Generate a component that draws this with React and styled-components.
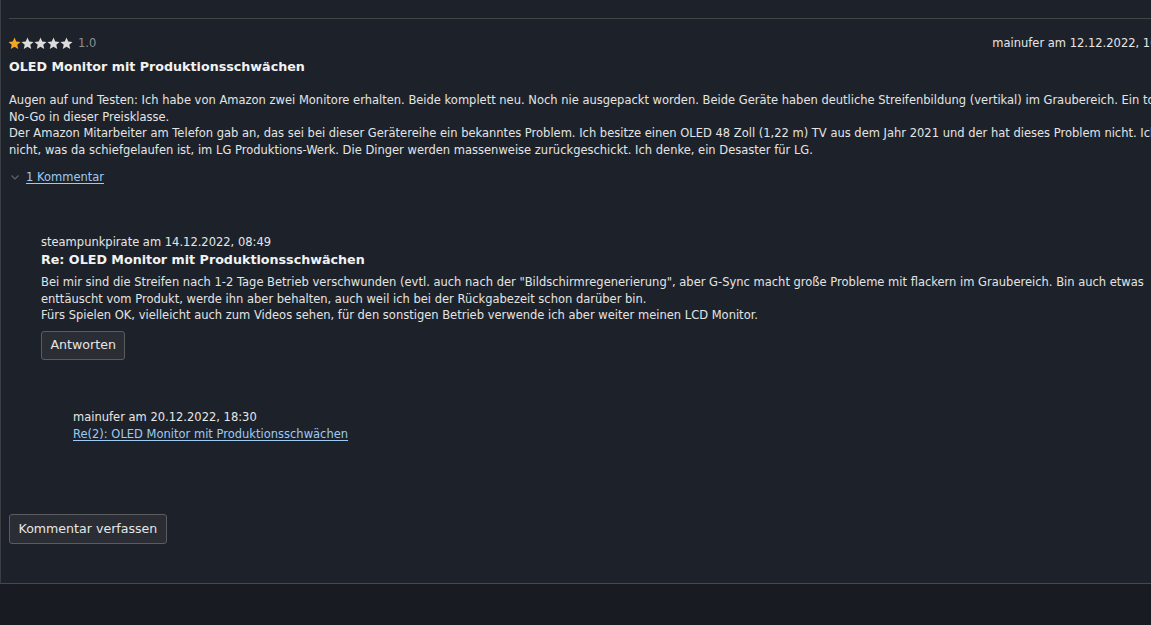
import React from "react";
import styled, { createGlobalStyle } from "styled-components";

const Global = createGlobalStyle`
  html, body { margin: 0; padding: 0; background: #181b21; overflow: hidden; }
  body { font-family: "DejaVu Sans", Verdana, sans-serif; color: #e6e6e6; }
  #root { width: 1151px; height: 625px; overflow: hidden; }
`;

const Panel = styled.section`
  width: 1193px;
  padding: 18px 9px 39px 8px;
  background: #1d222a;
  border-left: 1px solid #3a3d42;
  border-bottom: 1px solid #45484d;
`;

const Rule = styled.hr`
  margin: 0;
  border: 0;
  height: 1px;
  background: #44464a;
`;

const HeaderRow = styled.div`
  display: flex;
  justify-content: space-between;
  align-items: center;
  height: 16px;
  margin-top: 16px;
  font-size: 11.5px;
`;

const Rating = styled.div`
  display: flex;
  align-items: center;
`;

const Stars = styled.span`
  display: inline-flex;
  margin-left: -1px;
  margin-right: 5px;
`;

const Score = styled.span`
  color: #8c8f94;
`;

const Meta = styled.div`
  font-size: 11.5px;
  line-height: 16px;
  color: #e6e6e6;
  white-space: nowrap;
  padding-right: ${(p) => p.$pr || 0}px;
`;

const Title = styled.h3`
  margin: 8px 0 0;
  font-size: 12.7px;
  line-height: 16px;
  font-weight: bold;
  color: #f2f2f2;
`;

const Body = styled.p`
  margin: ${(p) => p.$top || 0}px 0 0;
  font-size: 11.5px;
  line-height: 16.5px;
  color: #e4e4e4;
`;

const Toggle = styled.div`
  display: flex;
  align-items: center;
  gap: 6px;
  margin-top: 11px;
  padding-left: 1px;
  font-size: 11.5px;
  line-height: 16px;
`;

const Link = styled.a`
  color: #9ccaf2;
  text-decoration: underline;
  text-underline-offset: 2px;
  cursor: pointer;
  font-size: 11.5px;
  line-height: 16px;
`;

const Reply = styled.div`
  margin-left: 32px;
  margin-top: ${(p) => p.$top}px;
  font-size: 11.5px;
  line-height: 16px;
`;

const ReplyTitle = styled.h4`
  margin: 1px 0 0;
  font-size: 12.7px;
  line-height: 18px;
  font-weight: bold;
  color: #f2f2f2;
`;

const Button = styled.button`
  display: block;
  margin-top: ${(p) => p.$top}px;
  height: ${(p) => p.$h}px;
  padding: 0 8.5px;
  background: #2a2d33;
  border: 1px solid #5a5c60;
  border-radius: 3px;
  color: #e6e6e6;
  font-family: "DejaVu Sans", Verdana, sans-serif;
  font-size: 12.6px;
  line-height: 16px;
  cursor: pointer;
`;

const LinkLine = styled.div`
  margin-top: 1px;
  height: 16px;
`;

const Star = ({ filled }) => (
  <svg width="13" height="13" viewBox="0 0 24 24">
    <path
      d="M12 1l3.2 7.3 7.9.7-6 5.2 1.8 7.8L12 18l-6.9 4 1.8-7.8-6-5.2 7.9-.7z"
      fill={filled ? "#f5a623" : "#dcdcdc"}
    />
  </svg>
);

const Chevron = () => (
  <svg width="10" height="10" viewBox="0 0 10 10">
    <path d="M1.5 3.5L5 7l3.5-3.5" fill="none" stroke="#5f646b" strokeWidth="1.2" />
  </svg>
);

export default function App() {
  return (
    <>
      <Global />
      <Panel>
        <Rule />
        <HeaderRow>
          <Rating>
            <Stars>
              {[0, 1, 2, 3, 4].map((i) => (
                <Star key={i} filled={i === 0} />
              ))}
            </Stars>
            <Score>1.0</Score>
          </Rating>
          <Meta $pr={26}>mainufer am 12.12.2022, 10:17</Meta>
        </HeaderRow>
        <Title>OLED Monitor mit Produktionsschwächen</Title>
        <Body $top={17}>
          Augen auf und Testen: Ich habe von Amazon zwei Monitore erhalten. Beide komplett neu. Noch nie ausgepackt worden. Beide Geräte haben deutliche Streifenbildung (vertikal) im Graubereich. Ein totales No-Go in dieser Preisklasse.
          <br />
          Der Amazon Mitarbeiter am Telefon gab an, das sei bei dieser Gerätereihe ein bekanntes Problem. Ich besitze einen OLED 48 Zoll (1,22 m) TV aus dem Jahr 2021 und der hat dieses Problem nicht. Ich weiß nicht, was da schiefgelaufen ist, im LG Produktions-Werk. Die Dinger werden massenweise zurückgeschickt. Ich denke, ein Desaster für LG.
        </Body>
        <Toggle>
          <Chevron />
          <Link>1 Kommentar</Link>
        </Toggle>
        <Reply $top={49}>
          <Meta>steampunkpirate am 14.12.2022, 08:49</Meta>
          <ReplyTitle>Re: OLED Monitor mit Produktionsschwächen</ReplyTitle>
          <Body $top={5}>
            Bei mir sind die Streifen nach 1-2 Tage Betrieb verschwunden (evtl. auch nach der "Bildschirmregenerierung", aber G-Sync macht große Probleme mit flackern im Graubereich. Bin auch etwas enttäuscht vom Produkt, werde ihn aber behalten, auch weil ich bei der Rückgabezeit schon darüber bin.
            <br />
            Fürs Spielen OK, vielleicht auch zum Videos sehen, für den sonstigen Betrieb verwende ich aber weiter meinen LCD Monitor.
          </Body>
          <Button $top={7} $h={29}>Antworten</Button>
          <Reply $top={49}>
            <Meta>mainufer am 20.12.2022, 18:30</Meta>
            <LinkLine>
              <Link>Re(2): OLED Monitor mit Produktionsschwächen</Link>
            </LinkLine>
          </Reply>
        </Reply>
        <Button $top={72} $h={30}>Kommentar verfassen</Button>
      </Panel>
    </>
  );
}
